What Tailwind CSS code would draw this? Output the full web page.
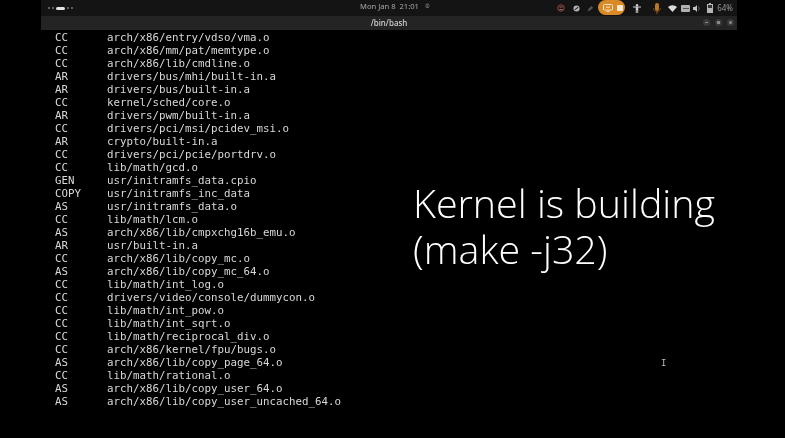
<!DOCTYPE html>
<html lang="en">
<head>
    <meta charset="UTF-8">
    <title>/bin/bash</title>
    <script src="https://cdn.jsdelivr.net/npm/@tailwindcss/browser@4"></script>
</head>
<body class="bg-black">
    <div class="relative w-[785px] h-[438px] overflow-hidden bg-black blur-[0.3px]">
        <div class="mx-[41px] w-[696px]">
            <!-- Top bar -->
            <div class="relative flex items-center h-[16px] bg-[#141414] text-[#a8a8a8] font-['Noto_Sans',sans-serif] text-[8px]">
                <div class="flex items-center gap-[2px] pl-[7px]">
                    <span class="w-[2px] h-[2px] rounded-full bg-[#777]"></span>
                    <span class="w-[2px] h-[2px] rounded-full bg-[#777]"></span>
                    <span class="w-[9px] h-[3px] rounded-full bg-[#e4e4e4]"></span>
                    <span class="w-[2px] h-[2px] rounded-full bg-[#777]"></span>
                    <span class="w-[2px] h-[2px] rounded-full bg-[#777]"></span>
                </div>
                <div class="absolute left-[319px] top-[1px] text-[7.6px] whitespace-nowrap">Mon Jan 8&nbsp; 21:01 &nbsp;&nbsp;<span class="text-[#777]">⌾</span></div>
                <!-- Tray icons -->
                <div class="ml-auto flex items-center pr-[4px]">
                    <svg class="w-[8px] h-[8px]" viewBox="0 0 8 8" fill="none" stroke="#a8403c" stroke-width="1"><circle cx="4" cy="4" r="3.2"/><path d="M2.5 3h3M2.5 5.5h3" stroke="#777"/></svg>
                    <svg class="w-[7px] h-[7px] ml-[8px]" viewBox="0 0 8 8"><circle cx="4" cy="4" r="3.5" fill="#b4b4b4"/><path d="M2 5.5l4-3" stroke="#222" stroke-width="1.2"/></svg>
                    <svg class="w-[7px] h-[7px] ml-[7px]" viewBox="0 0 8 8"><path d="M1 7l.6-2.4L5 1l2 2-3.4 3.4z" fill="#555"/></svg>
                    <div class="flex items-center gap-[4px] w-[27px] h-[15px] ml-[4px] mt-[-1px] rounded-full bg-[#d98a26] pl-[5px]">
                        <svg class="w-[10px] h-[8px]" viewBox="0 0 10 8" fill="none" stroke="#f3e2c6" stroke-width="1"><rect x=".5" y=".5" width="9" height="5.5" rx="1"/><path d="M3 3.2h4M3.5 7.5h3"/></svg>
                        <span class="w-[6px] h-[6px] rounded-[1px] bg-[#f7ead6]"></span>
                    </div>
                    <svg class="w-[8px] h-[9px] ml-[8px]" viewBox="0 0 8 9" fill="#d0d0d0"><circle cx="4" cy="1.2" r="1.2"/><path d="M0 2.6h8v1H5.2V9H4.3V6.2h-.6V9h-.9V3.6H0z"/></svg>
                    <svg class="w-[10px] h-[11px] ml-[11px]" viewBox="0 0 10 11"><rect x="3" y="0" width="4" height="8" rx="2" fill="#b9771f"/><path d="M1.5 5a3.5 3.5 0 0 0 7 0" stroke="#6d4512" fill="none"/><path d="M4.5 8h1v3h-1z" fill="#8a5a1a"/></svg>
                    <svg class="w-[9px] h-[7px] ml-[6px]" viewBox="0 0 9 7" fill="#dcdcdc"><path d="M0 2a6.5 6.5 0 0 1 9 0L4.5 7z"/></svg>
                    <span class="flex items-center justify-center w-[9px] h-[7px] ml-[4px] rounded-[1px] bg-[#b0b0b0]"><span class="w-[6px] h-px bg-[#555]"></span></span>
                    <svg class="w-[8px] h-[7px] ml-[3px]" viewBox="0 0 8 7" fill="#c4c4c4"><path d="M0 2h2l2-2v7L2 5H0z"/><path d="M5.5 1.5a3 3 0 0 1 0 4" stroke="#666" fill="none"/></svg>
                    <svg class="w-[6px] h-[10px] ml-[6px]" viewBox="0 0 6 10"><path d="M2 0h2v1h2v9H0V1h2z" fill="#b5b5b5"/><rect x="1" y="2" width="4" height="3" fill="#333"/></svg>
                    <span class="ml-[4px] text-[#969696]">64%</span>
                </div>
            </div>
            <!-- Terminal title bar -->
            <div class="relative flex items-center justify-center h-[14px] bg-[#242424] text-[#d4d4d4] font-medium font-['Noto_Sans',sans-serif] text-[8px]">
                /bin/bash
                <div class="absolute right-[3px] top-[3px] flex gap-[5px]">
                    <span class="flex items-center justify-center w-[7px] h-[7px] rounded-full bg-[#3a3a3a]"><span class="w-[3px] h-px bg-[#888]"></span></span>
                    <span class="flex items-center justify-center w-[7px] h-[7px] rounded-full bg-[#3a3a3a]"><span class="w-[3px] h-[3px] bg-[#888]"></span></span>
                    <span class="flex items-center justify-center w-[7px] h-[7px] rounded-full bg-[#3a3a3a]"><span class="w-[3px] h-[3px] rounded-full bg-[#888]"></span></span>
                </div>
            </div>
            <!-- Build output -->
            <pre class="pl-px pt-[0.5px] font-['DejaVu_Sans_Mono',monospace] text-[10.8px] leading-[13.03px] text-[#d8d8d8]">  CC      arch/x86/entry/vdso/vma.o
  CC      arch/x86/mm/pat/memtype.o
  CC      arch/x86/lib/cmdline.o
  AR      drivers/bus/mhi/built-in.a
  AR      drivers/bus/built-in.a
  CC      kernel/sched/core.o
  AR      drivers/pwm/built-in.a
  CC      drivers/pci/msi/pcidev_msi.o
  AR      crypto/built-in.a
  CC      drivers/pci/pcie/portdrv.o
  CC      lib/math/gcd.o
  GEN     usr/initramfs_data.cpio
  COPY    usr/initramfs_inc_data
  AS      usr/initramfs_data.o
  CC      lib/math/lcm.o
  AS      arch/x86/lib/cmpxchg16b_emu.o
  AR      usr/built-in.a
  CC      arch/x86/lib/copy_mc.o
  AS      arch/x86/lib/copy_mc_64.o
  CC      lib/math/int_log.o
  CC      drivers/video/console/dummycon.o
  CC      lib/math/int_pow.o
  CC      lib/math/int_sqrt.o
  CC      lib/math/reciprocal_div.o
  CC      arch/x86/kernel/fpu/bugs.o
  AS      arch/x86/lib/copy_page_64.o
  CC      lib/math/rational.o
  AS      arch/x86/lib/copy_user_64.o
  AS      arch/x86/lib/copy_user_uncached_64.o</pre>
        </div>
        <!-- Video caption -->
        <div class="absolute left-[413px] top-[180px] font-['Open_Sans',sans-serif] font-light text-[39.4px] leading-[46px] text-white whitespace-nowrap">Kernel is building<br>(make -j32)</div>
        <!-- Mouse cursor -->
        <span class="absolute left-[661px] top-[357px] font-['DejaVu_Sans_Mono',monospace] text-[9px] leading-[12px] text-[#bbb]">I</span>
    </div>
</body>
</html>
